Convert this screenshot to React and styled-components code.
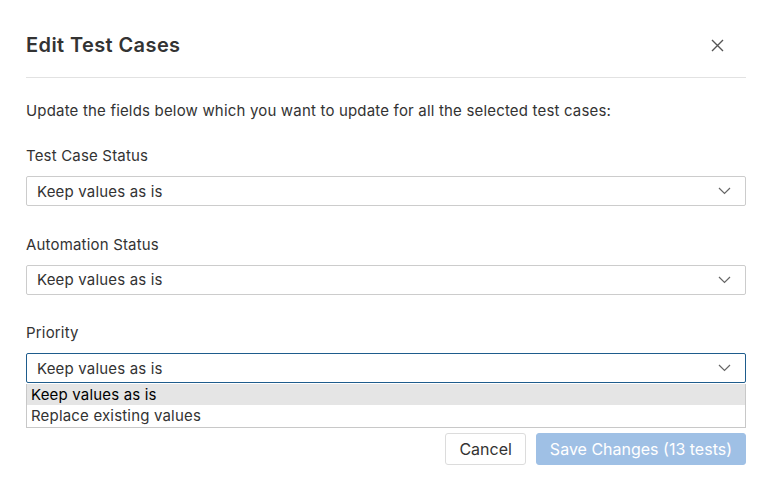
import React from 'react';
import styled, { createGlobalStyle } from 'styled-components';

const GlobalStyle = createGlobalStyle`
  body {
    margin: 0;
    background: #fff;
    font-family: Inter, "Liberation Sans", Arial, sans-serif;
    letter-spacing: 0.18px;
    color: #333;
  }
`;

const Modal = styled.div`
  width: 720px;
  padding: 0 25px 0 26px;
`;

const Header = styled.div`
  display: flex;
  align-items: center;
  justify-content: space-between;
  padding: 33px 0 20px;
  border-bottom: 1px solid #e2e2e2;
`;

const Title = styled.h2`
  margin: 0;
  font-size: 20px;
  line-height: 24px;
  font-weight: 600;
  letter-spacing: 0.4px;
  color: #333;
`;

const CloseButton = styled.button`
  display: flex;
  align-items: center;
  justify-content: center;
  width: 24px;
  height: 24px;
  margin-right: 17px;
  padding: 0;
  border: none;
  background: none;
  color: #555;
  cursor: pointer;
`;

const Intro = styled.p`
  margin: 23px 0 25px;
  font-size: 15px;
  line-height: 20px;
`;

const Field = styled.div`
  position: relative;
  & + & {
    margin-top: 28.5px;
  }
`;

const Label = styled.label`
  display: block;
  font-size: 15px;
  line-height: 20px;
  margin-bottom: 10px;
  color: #333;
`;

const SelectBox = styled.div`
  box-sizing: border-box;
  display: flex;
  align-items: center;
  justify-content: space-between;
  height: 30px;
  padding: 0 14px 0 10px;
  border: 1px solid ${props => (props.open ? '#1e5c8c' : '#cccccc')};
  border-radius: 2px;
  font-size: 15px;
  color: #333;
  background: #fff;
`;

const Options = styled.ul`
  position: absolute;
  left: 0;
  right: 0;
  top: calc(100% + 1px);
  margin: 0;
  padding: 0 0 1px;
  list-style: none;
  border: 1px solid #c8c8c8;
  border-top: none;
  background: #fff;
`;

const Option = styled.li`
  height: 21px;
  line-height: 22px;
  padding-left: 4px;
  font-size: 15px;
  color: ${props => (props.active ? '#000' : '#333')};
  background: ${props => (props.active ? '#e5e5e5' : '#fff')};
`;

const Footer = styled.div`
  display: flex;
  justify-content: flex-end;
  gap: 10px;
  margin-top: 50px;
`;

const Button = styled.button`
  box-sizing: border-box;
  height: 32px;
  padding: 0 13px;
  border-radius: 3px;
  font-family: inherit;
  font-size: 16px;
  letter-spacing: 0;
  border: 1px solid ${props => (props.primary ? '#9fc0e5' : '#dcdcdc')};
  background: ${props => (props.primary ? '#9fc0e5' : '#fff')};
  color: ${props => (props.primary ? '#fff' : '#333')};
`;

const Chevron = () => (
  <svg width="13" height="8" viewBox="0 0 13 8" fill="none">
    <path d="M1 1l5.5 5.5L12 1" stroke="#666" strokeWidth="1.2" />
  </svg>
);

const Select = ({ value, open, options }) => (
  <>
    <SelectBox open={open}>
      <span>{value}</span>
      <Chevron />
    </SelectBox>
    {open && (
      <Options>
        {options.map(o => (
          <Option key={o} active={o === value}>
            {o}
          </Option>
        ))}
      </Options>
    )}
  </>
);

const choices = ['Keep values as is', 'Replace existing values'];

export default function App() {
  return (
    <>
      <GlobalStyle />
      <Modal>
        <Header>
          <Title>Edit Test Cases</Title>
          <CloseButton aria-label="Close">
            <svg width="13" height="13" viewBox="0 0 13 13">
              <path d="M1 1l11 11M12 1L1 12" stroke="#555" strokeWidth="1.4" />
            </svg>
          </CloseButton>
        </Header>
        <Intro>
          Update the fields below which you want to update for all the selected test cases:
        </Intro>
        <Field>
          <Label>Test Case Status</Label>
          <Select value="Keep values as is" />
        </Field>
        <Field>
          <Label>Automation Status</Label>
          <Select value="Keep values as is" />
        </Field>
        <Field>
          <Label>Priority</Label>
          <Select value="Keep values as is" open options={choices} />
        </Field>
        <Footer>
          <Button>Cancel</Button>
          <Button primary>Save Changes (13 tests)</Button>
        </Footer>
      </Modal>
    </>
  );
}
